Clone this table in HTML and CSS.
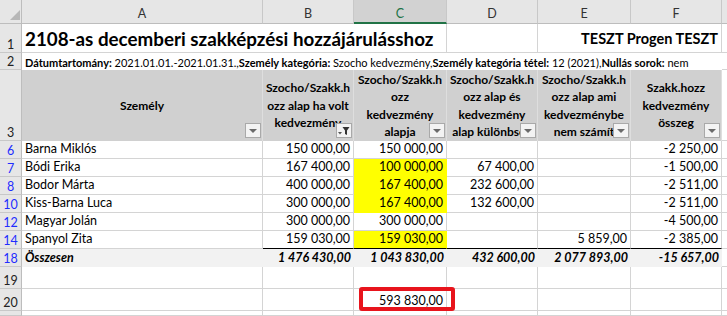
FILE: index.html
```html
<!DOCTYPE html>
<html lang="hu">
<head>
<meta charset="utf-8">
<title>Sheet</title>
<link rel="stylesheet" href="styles.css">
</head>
<body>
<div class="sheet">
  <!-- column headers -->
  <div class="corner"><svg width="10" height="10" viewBox="0 0 10 10"><polygon points="10,0 10,10 0,10" fill="#b7b7b7"/></svg></div>
  <div class="ch">A</div>
  <div class="ch">B</div>
  <div class="ch sel">C</div>
  <div class="ch">D</div>
  <div class="ch">E</div>
  <div class="ch">F</div>
  <div class="ch end"></div>

  <!-- row 1 -->
  <div class="rh">1</div>
  <div class="c title span3">2108-as decemberi szakképzési hozzájárulásshoz</div>
  <div class="c"></div>
  <div class="c company span2">TESZT Progen TESZT</div>
  <div class="c g"></div>

  <!-- row 2 -->
  <div class="rh">2</div>
  <div class="c info span6"><b>Dátumtartomány:</b>&nbsp;2021.01.01.-2021.01.31.,<b>Személy kategória:</b>&nbsp;Szocho kedvezmény,<b>Személy kategória tétel:</b>&nbsp;12 (2021),<b>Nullás sorok:</b>&nbsp;nem</div>
  <div class="c g"></div>

  <!-- row 3 -->
  <div class="rh">3</div>
  <div class="h"><span>Személy</span><i class="fb"></i></div>
  <div class="h"><span>Szocho/Szakk.h<br>ozz alap ha volt<br>kedvezmény</span><i class="fb on"><svg width="14" height="13" viewBox="0 0 14 13"><polygon points="1,8 5,8 3,10.5" fill="#555"/><polygon points="5.5,3 12.5,3 10,6.5 10,11 8,10 8,6.5" fill="#333"/></svg></i></div>
  <div class="h"><span>Szocho/Szakk.h<br>ozz<br>kedvezmény<br>alapja</span><i class="fb"></i></div>
  <div class="h"><span>Szocho/Szakk.h<br>ozz alap és<br>kedvezmény<br>alap különbség</span><i class="fb"></i></div>
  <div class="h"><span>Szocho/Szakk.h<br>ozz alap ami<br>kedvezménybe<br>nem számít</span><i class="fb"></i></div>
  <div class="h"><span>Szakk.hozz<br>kedvezmény<br>összeg</span><i class="fb"></i></div>
  <div class="c g"></div>

  <!-- row 6 -->
  <div class="rh blue">6</div>
  <div class="c">Barna Miklós</div>
  <div class="c num">150 000,00</div>
  <div class="c num">150 000,00</div>
  <div class="c num"></div>
  <div class="c num"></div>
  <div class="c num">-2 250,00</div>
  <div class="c g"></div>

  <!-- row 7 -->
  <div class="rh blue">7</div>
  <div class="c">Bódi Erika</div>
  <div class="c num">167 400,00</div>
  <div class="c num yel">100 000,00</div>
  <div class="c num">67 400,00</div>
  <div class="c num"></div>
  <div class="c num">-1 500,00</div>
  <div class="c g"></div>

  <!-- row 8 -->
  <div class="rh blue">8</div>
  <div class="c">Bodor Márta</div>
  <div class="c num">400 000,00</div>
  <div class="c num yel">167 400,00</div>
  <div class="c num">232 600,00</div>
  <div class="c num"></div>
  <div class="c num">-2 511,00</div>
  <div class="c g"></div>

  <!-- row 10 -->
  <div class="rh blue">10</div>
  <div class="c">Kiss-Barna Luca</div>
  <div class="c num">300 000,00</div>
  <div class="c num yel">167 400,00</div>
  <div class="c num">132 600,00</div>
  <div class="c num"></div>
  <div class="c num">-2 511,00</div>
  <div class="c g"></div>

  <!-- row 12 -->
  <div class="rh blue">12</div>
  <div class="c">Magyar Jolán</div>
  <div class="c num">300 000,00</div>
  <div class="c num">300 000,00</div>
  <div class="c num"></div>
  <div class="c num"></div>
  <div class="c num">-4 500,00</div>
  <div class="c g"></div>

  <!-- row 14 -->
  <div class="rh blue">14</div>
  <div class="c">Spanyol Zita</div>
  <div class="c num last">159 030,00</div>
  <div class="c num yel last">159 030,00</div>
  <div class="c num last"></div>
  <div class="c num last">5 859,00</div>
  <div class="c num last">-2 385,00</div>
  <div class="c g"></div>

  <!-- row 18 -->
  <div class="rh blue">18</div>
  <div class="c tot">Összesen</div>
  <div class="c num tot">1 476 430,00</div>
  <div class="c num tot">1 043 830,00</div>
  <div class="c num tot">432 600,00</div>
  <div class="c num tot">2 077 893,00</div>
  <div class="c num tot">-15 657,00</div>
  <div class="c g"></div>

  <!-- row 19 -->
  <div class="rh">19</div>
  <div class="c"></div>
  <div class="c"></div>
  <div class="c"></div>
  <div class="c"></div>
  <div class="c"></div>
  <div class="c"></div>
  <div class="c g"></div>

  <!-- row 20 -->
  <div class="rh">20</div>
  <div class="c"></div>
  <div class="c"></div>
  <div class="c num mark">593 830,00<span class="ring"></span></div>
  <div class="c"></div>
  <div class="c"></div>
  <div class="c"></div>
  <div class="c g"></div>

  <!-- row 21 (partial) -->
  <div class="rh"></div>
  <div class="c"></div>
  <div class="c"></div>
  <div class="c"></div>
  <div class="c"></div>
  <div class="c"></div>
  <div class="c"></div>
  <div class="c g"></div>
</div>
</body>
</html>
```

FILE: styles.css
```css
html, body {
  margin: 0;
  padding: 0;
  background: #ffffff;
}

.sheet {
  display: grid;
  grid-template-columns: 22px 241px 91px 93px 91px 93px 91px 5px;
  grid-template-rows: 24px 29px 17px 71px repeat(7, 18px) 22px 22px 5px;
  width: 727px;
  height: 316px;
  overflow: hidden;
  font-family: Lato, "Open Sans", sans-serif;
  font-size: 12.5px;
  color: #000;
}

.corner {
  background: #e6e6e6;
  border-right: 1px solid #bdbdbd;
  border-bottom: 1px solid #bdbdbd;
  box-sizing: border-box;
  display: flex;
  align-items: flex-end;
  justify-content: flex-end;
  padding: 0 1px 3px 0;
}

.ch {
  background: #e6e6e6;
  border-right: 1px solid #c8c8c8;
  border-bottom: 1px solid #bdbdbd;
  box-sizing: border-box;
  display: flex;
  align-items: flex-end;
  justify-content: center;
  padding-bottom: 2px;
  font-size: 12.5px;
  color: #333;
}

.ch.sel {
  background: #d2d2d2;
  color: #217346;
  border-bottom: 2px solid #217346;
  padding-bottom: 1px;
}

.ch.end {
  border-right: none;
}

.rh {
  background: #e6e6e6;
  border-right: 1px solid #bdbdbd;
  border-bottom: 1px solid #c8c8c8;
  box-sizing: border-box;
  display: flex;
  align-items: flex-end;
  justify-content: center;
  font-size: 12.5px;
  line-height: 1;
  padding-bottom: 1px;
  color: #222;
}

.rh.blue {
  color: #1f2dff;
}

.c {
  border-right: 1px solid #d4d4d4;
  border-bottom: 1px solid #d4d4d4;
  box-sizing: border-box;
  display: flex;
  align-items: flex-end;
  padding: 0 3px 1px 3px;
  white-space: nowrap;
  overflow: hidden;
  line-height: 16px;
  min-width: 0;
}

.c.g {
  border-right: none;
}

.num {
  justify-content: flex-end;
}

.span2 { grid-column: span 2; }
.span3 { grid-column: span 3; }
.span6 { grid-column: span 6; }

.title {
  font-weight: 700;
  font-size: 18.8px;
  line-height: 24px;
  padding-bottom: 1px;
}

.company {
  justify-content: flex-end;
  font-weight: 700;
  font-size: 14.5px;
  line-height: 20px;
  padding-bottom: 3px;
}

.info {
  font-size: 11px;
  line-height: 15px;
  border-right: none;
  border-bottom: none;
  padding-bottom: 0;
}

.info b {
  font-weight: 700;
}

.h {
  position: relative;
  background: #d0d0d0;
  border-right: 1px solid #dedede;
  box-sizing: border-box;
  display: flex;
  align-items: center;
  justify-content: center;
  text-align: center;
  font-weight: 700;
  font-size: 12px;
  line-height: 17.5px;
  overflow: hidden;
  white-space: nowrap;
}

.fb {
  position: absolute;
  right: 1px;
  bottom: 3px;
  width: 16px;
  height: 15px;
  box-sizing: border-box;
  background: #f3f3f3;
  border: 1px solid #a9a9a9;
  display: flex;
  align-items: center;
  justify-content: center;
}

.fb::after {
  content: "";
  width: 0;
  height: 0;
  border-left: 4px solid transparent;
  border-right: 4px solid transparent;
  border-top: 4px solid #6a6a6a;
}

.fb.on::after {
  display: none;
}

.yel {
  background: #ffff00;
  border-right-color: #ffff00;
  border-bottom-color: #ffff00;
}

.last {
  border-bottom: 1px solid #000;
}

.yel.last {
  border-bottom: 1px solid #000;
}

.tot {
  background: #f2f2f2;
  border-right: none;
  border-bottom: none;
  font-weight: 700;
  font-style: italic;
}

.mark {
  position: relative;
  overflow: visible;
}

.ring {
  position: absolute;
  left: 5px;
  top: -2px;
  width: 96px;
  height: 24px;
  box-sizing: border-box;
  border: 4px solid #e8141c;
  border-radius: 3px;
}
```
